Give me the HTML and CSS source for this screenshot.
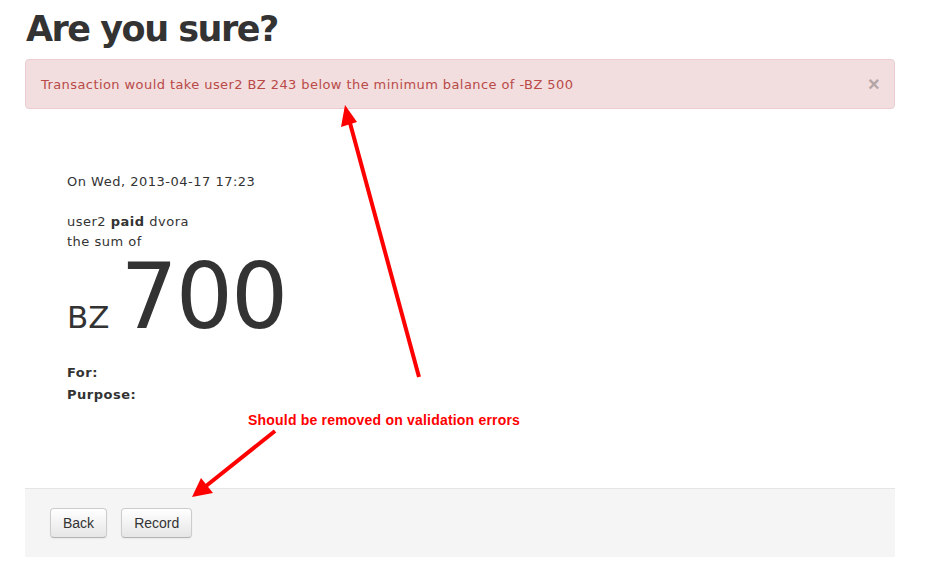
FILE: index.html
```html
<!DOCTYPE html>
<html lang="en">
<head>
	<meta charset="UTF-8">
	<title>Are you sure?</title>
	<link rel="stylesheet" href="styles.css">
</head>
<body>
	<div class="page">
		<h1>Are you sure?</h1>
		<div class="alert">
			<span>Transaction would take user2 BZ 243 below the minimum balance of -BZ 500</span>
			<span class="close">&times;</span>
		</div>

		<div class="transaction">
			<p class="date">On Wed, 2013-04-17 17:23</p>
			<p class="who">user2 <b>paid</b> dvora<br>the sum of</p>
			<div class="amount"><span class="currency">BZ</span><span class="value">700</span></div>
			<p class="meta"><b>For:</b></p>
			<p class="meta"><b>Purpose:</b></p>
		</div>

		<div class="actions">
			<button>Back</button>
			<button>Record</button>
		</div>

		<!-- annotations drawn over the screenshot -->
		<div class="note">Should be removed on validation errors</div>
		<svg class="arrows" width="934" height="588" viewBox="0 0 934 588">
			<line x1="419" y1="377" x2="350" y2="123" stroke="#ff0000" stroke-width="4"/>
			<polygon points="345,105 341,127 357,122" fill="#ff0000"/>
			<line x1="275" y1="431" x2="206" y2="486" stroke="#ff0000" stroke-width="4"/>
			<polygon points="192,497 201,478 213,493" fill="#ff0000"/>
		</svg>
	</div>
</body>
</html>
```

FILE: styles.css
```css
body {
	margin: 0;
	background: #fff;
	color: #333;
	font-family: "DejaVu Sans", "Open Sans", sans-serif;
}
.page {
	position: relative;
	width: 870px;
	height: 588px;
	padding: 0 25px;
}
h1 {
	margin: 0;
	padding: 4px 0 0 1px;
	font-size: 35px;
	line-height: 50px;
	letter-spacing: -1.5px;
	font-weight: bold;
	color: #333;
}
.alert {
	display: flex;
	justify-content: space-between;
	align-items: center;
	margin-top: 5px;
	height: 48px;
	padding: 0 14px 0 15px;
	background: #f2dede;
	border: 1px solid #ebccd1;
	border-radius: 4px;
	color: #b94a48;
	font-size: 13px;
	letter-spacing: 0.42px;
}
.close {
	color: #b4a5a6;
	font-size: 20px;
	font-weight: bold;
	font-family: "Liberation Sans", sans-serif;
}
.transaction {
	height: 379px;
	padding: 63px 42px 0;
	box-sizing: border-box;
	font-size: 13px;
	letter-spacing: 0.5px;
}
.transaction p {
	margin: 0;
	line-height: 20px;
}
.date {
	margin-bottom: 20px !important;
}
.amount {
	display: flex;
	align-items: baseline;
	height: 100px;
	margin-bottom: 10px;
	color: #333;
	letter-spacing: 0;
}
.currency {
	font-size: 31px;
	margin-right: 11px;
	line-height: 100px;
}
.value {
	font-size: 90px;
	letter-spacing: -2px;
	line-height: 90px;
}
.meta {
	line-height: 22px !important;
}
.actions {
	display: flex;
	gap: 14px;
	height: 69px;
	padding: 19px 25px 0;
	box-sizing: border-box;
	background: #f5f5f5;
	border-top: 1px solid #e5e5e5;
}
button {
	height: 30px;
	padding: 0 12px;
	font-family: "Liberation Sans", sans-serif;
	font-size: 14px;
	color: #333;
	background: linear-gradient(#ffffff, #e6e6e6);
	border: 1px solid #ccc;
	border-bottom-color: #b3b3b3;
	border-radius: 4px;
	box-shadow: inset 0 1px 0 rgba(255, 255, 255, .2), 0 1px 2px rgba(0, 0, 0, .05);
	cursor: pointer;
}
.note {
	position: absolute;
	left: 248px;
	top: 412px;
	color: #ff0000;
	font-family: "Liberation Sans", sans-serif;
	font-weight: bold;
	font-size: 14px;
	letter-spacing: 0.2px;
}
.arrows {
	position: absolute;
	left: 0;
	top: 0;
	pointer-events: none;
}
```
